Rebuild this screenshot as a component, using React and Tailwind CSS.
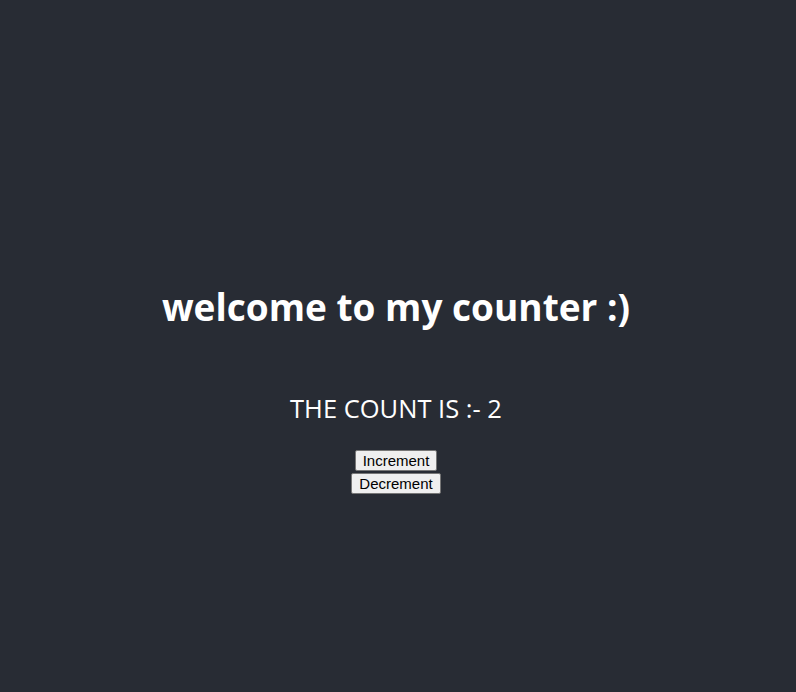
import { useState } from "react";

function CounterButton({ label, onClick }) {
  return (
    <button
      type="button"
      onClick={onClick}
      className="rounded-[2px] border border-[#767676] bg-[#efefef] px-[7px] py-[1px] text-[15px] leading-[17px] text-black font-['Liberation_Sans',Arial,sans-serif]"
    >
      {label}
    </button>
  );
}

export default function App() {
  const [count, setCount] = useState(2);

  return (
    <div className="flex min-h-screen flex-col items-center bg-[#282c34] pr-[4px] pt-[284px] text-center text-white font-['Open_Sans',sans-serif]">
      <h1 className="text-[37px] font-bold leading-[46px]">welcome to my counter :)</h1>
      <p className="mt-[62px] text-[25.5px] leading-[32px]">THE COUNT IS :- {count}</p>
      <div className="mt-[26px] flex flex-col items-center gap-[2px]">
        <CounterButton label="Increment" onClick={() => setCount(count + 1)} />
        <CounterButton label="Decrement" onClick={() => setCount(count - 1)} />
      </div>
    </div>
  );
}
